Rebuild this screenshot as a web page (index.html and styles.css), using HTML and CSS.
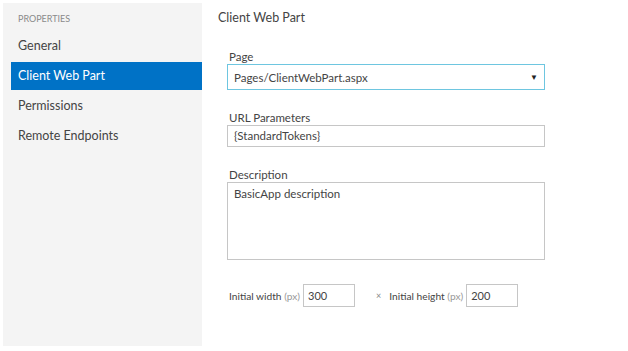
FILE: index.html
```html
<!DOCTYPE html>
<html>
<head>
    <title>Client Web Part</title>
    <link rel="stylesheet" href="styles.css">
</head>
<body>

<div class="page">
    <div class="sidebar">
        <div class="side-head">PROPERTIES</div>
        <div class="side-item">General</div>
        <div class="side-item selected">Client Web Part</div>
        <div class="side-item">Permissions</div>
        <div class="side-item">Remote Endpoints</div>
    </div>

    <div class="main">
        <div class="title">Client Web Part</div>

        <div class="form">
            <div class="field">
                <div class="label">Page</div>
                <div class="box select">
                    <span>Pages/ClientWebPart.aspx</span>
                    <span class="arrow">&#9660;</span>
                </div>
            </div>

            <div class="field">
                <div class="label">URL Parameters</div>
                <div class="box input">{StandardTokens}</div>
            </div>

            <div class="field">
                <div class="label">Description</div>
                <div class="box textarea">BasicApp description</div>
            </div>

            <div class="size-row">
                <span class="size-label">Initial width <span class="unit">(px)</span></span>
                <div class="box small">300</div>
                <span class="times">&times;</span>
                <span class="size-label">Initial height <span class="unit">(px)</span></span>
                <div class="box small">200</div>
            </div>
        </div>
    </div>
</div>

</body>
</html>
```

FILE: styles.css
```css
BODY {
    margin: 0;
    background: #fff;
    font-family: Lato, "Open Sans", sans-serif;
    font-size: 11px;
    color: #444;
}

.page {
    display: flex;
    width: 628px;
    height: 351px;
}

.sidebar {
    width: 199px;
    height: 343px;
    margin: 3px 0 0 3px;
    padding: 0 0 0 8px;
    box-sizing: border-box;
    background: #f4f4f4;
}

.side-head {
    font-size: 9px;
    color: #8a8a8a;
    padding: 10px 0 0 7px;
    height: 28px;
    box-sizing: border-box;
}

.side-item {
    height: 30px;
    line-height: 30px;
    padding-left: 7px;
    font-size: 12.5px;
    color: #444;
}

.side-item.selected {
    height: 28px;
    line-height: 28px;
    margin: 1px 0;
    background: #0072c6;
    color: #fff;
}

.main {
    flex: 1;
    padding: 10px 0 0 16px;
}

.title {
    font-size: 12.5px;
    color: #444;
    height: 40px;
}

.form {
    padding-left: 9px;
    width: 318px;
}

.field {
    margin-bottom: 21px;
}

.label {
    font-size: 11.5px;
    color: #444;
    height: 14px;
    line-height: 14px;
    padding-left: 2px;
}

.box {
    border: 1px solid #c6c6c6;
    background: #fff;
    box-sizing: border-box;
    font-size: 11.5px;
    color: #444;
    padding: 0 6px;
}

.select {
    display: flex;
    justify-content: space-between;
    align-items: center;
    height: 26px;
    border-color: #6ec6e0;
}

.arrow {
    font-size: 8px;
    color: #222;
}

.input {
    height: 22px;
    line-height: 20px;
}

.textarea {
    height: 78px;
    padding-top: 4px;
}

.size-row {
    display: flex;
    align-items: center;
    margin-top: 24px;
}

.size-label {
    font-size: 10.2px;
    padding: 0 3px 0 2px;
}

.unit {
    color: #999;
}

.small {
    width: 52px;
    height: 23px;
    line-height: 21px;
    padding: 0 4px;
    font-size: 11px;
}

.times {
    font-size: 9px;
    color: #888;
    margin: 0 6px 0 21px;
}
```
